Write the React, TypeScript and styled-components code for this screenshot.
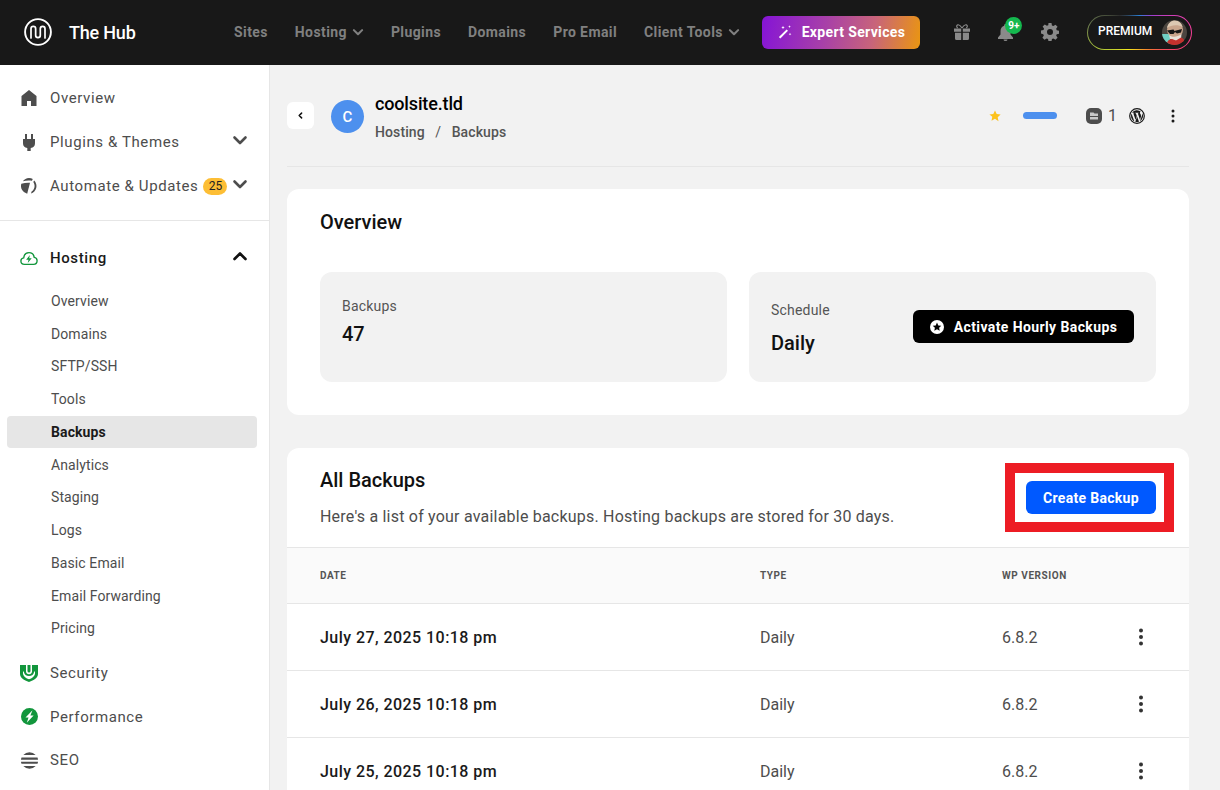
import styled, { createGlobalStyle } from 'styled-components';

const GlobalStyle = createGlobalStyle`
  html, body {
    margin: 0;
    padding: 0;
    height: 790px;
    overflow: hidden;
    background: #f2f2f2;
    font-family: Roboto, "Liberation Sans", sans-serif;
  }
  * {
    box-sizing: border-box;
  }
`;

const chevronPaths = {
  up: 'M2.5 11 8 5.5l5.5 5.5',
  down: 'M2.5 5.5 8 11l5.5-5.5',
  left: 'M10.5 2.500 5 8l5.500 5.500',
};

const Chevron = ({
  dir = 'down',
  size = 16,
  width = 2.6,
}: {
  dir?: 'up' | 'down' | 'left';
  size?: number;
  width?: number;
}) => (
  <svg width={size} height={size} viewBox="0 0 16 16" fill="none">
    <path d={chevronPaths[dir]} stroke="currentColor" strokeWidth={width} strokeLinecap="round" strokeLinejoin="round" />
  </svg>
);

const Logo = () => (
  <svg width="28" height="28" viewBox="0 0 28 28" fill="none" stroke="#fff">
    <circle cx="14" cy="14" r="12.900" strokeWidth="1.900" />
    <path
      d="M7 20V10.700a2.300 2.300 0 0 1 4.650 0v6.600a2.300 2.300 0 0 0 4.650 0v-6.600a2.350 2.350 0 0 1 4.700 0V20"
      strokeWidth="1.700"
      strokeLinecap="round"
    />
  </svg>
);

const WandIcon = () => (
  <svg width="14" height="14" viewBox="0 0 14 14" fill="#fff">
    <path d="M8.6 4.4 10 5.8 2.3 13.5.9 12.1z" />
    <path d="M5 .8l.5 1.2 1.2.5-1.2.5L5 4.2l-.5-1.2-1.2-.5L4.500 2zM11.500 .3l.4 1 1 .4-1 .4-.4 1-.4-1-1-.4 1-.4zM12 7.800l.4 1 1 .4-1 .4-.4 1-.4-1-1-.4 1-.4z" />
  </svg>
);

const GiftIcon = () => (
  <svg width="16" height="16" viewBox="0 0 16 16" fill="#8a8a8a">
    <path d="M0 4.500h7.200v3.300H0zM8.800 4.500H16v3.300H8.800zM1 8.800h6.200V16H2.500A1.500 1.500 0 0 1 1 14.500zM8.800 8.800H15v5.700a1.500 1.500 0 0 1-1.500 1.500H8.800z" />
    <path
      d="M8 4C6.500 1.500 5 .5 3.700 .8 2.300 1.200 2.300 3.300 3.800 4M8 4c1.500-2.500 3-3.500 4.300-3.200 1.400.4 1.400 2.500-.1 3.200"
      fill="none"
      stroke="#8a8a8a"
      strokeWidth="1.200"
    />
  </svg>
);

const BellIcon = () => (
  <svg width="15" height="17" viewBox="0 0 15 17" fill="#8a8a8a">
    <path d="M7.500 0a1.300 1.300 0 0 1 1.300 1.300v.5C11.200 2.400 12.500 4.500 12.500 7v3.500l2.500 3V15H0v-1.500l2.500-3V7c0-2.500 1.300-4.600 3.700-5.200v-.5A1.300 1.300 0 0 1 7.500 0zM5.500 15.500h4a2 1.500 0 0 1-4 0z" />
  </svg>
);

const GearIcon = () => (
  <svg width="18" height="18" viewBox="0 0 24 24" fill="#8a8a8a">
    <path
      fillRule="evenodd"
      d="M10 0h4l.6 3.300 1.900.8L19.300 2.200l2.800 2.800-1.900 2.800.8 1.900 3.300.6v4l-3.300.6-.8 1.900 1.900 2.800-2.800 2.800-2.800-1.900-1.900.8-.6 3.300h-4l-.6-3.300-1.900-.8-2.800 1.900-2.800-2.800 1.900-2.800-.8-1.900L0 14v-4l3.300-.6.8-1.900L2.200 4.700 5 1.900l2.800 1.900 1.900-.8zM12 8a4 4 0 1 0 0 8 4 4 0 0 0 0-8z"
    />
  </svg>
);

const Portrait = () => (
  <svg width="25" height="25" viewBox="0 0 25 25">
    <defs>
      <clipPath id="portrait-clip">
        <circle cx="12.500" cy="12.500" r="12.500" />
      </clipPath>
    </defs>
    <g clipPath="url(#portrait-clip)">
      <rect width="25" height="25" fill="#4c4640" />
      <path d="M0 14h8v11H0z" fill="#6fcfc4" />
      <ellipse cx="13" cy="9.500" rx="8" ry="8.500" fill="#c9a58c" />
      <path d="M5 8c1-5 4-7.500 8-7.500s7 3 7.500 6.500C17 4.500 9 4.500 5 8z" fill="#dcc8b2" />
      <path d="M5 10.500l6.500-1 1 1.500 1.500-.5 6-1.500-1 3.500-4 1-2-1.500-1.500 2H8z" fill="#161616" />
      <path d="M7 15c3 2.500 8 2.500 12.500-1l-.5 5-5 2-6-2z" fill="#e8e1d8" />
      <path d="M4 25c1-4 3-6 6-6l4 1.500 5-3c3 1 4.500 4 4.500 7.500z" fill="#c4312d" />
    </g>
  </svg>
);

const HomeIcon = () => (
  <svg width="16" height="16" viewBox="0 0 16 16" fill="#4d4d4d">
    <path d="M8 0l7.500 6V16H10V11H6v5H.5V6z" />
  </svg>
);

const PlugIcon = () => (
  <svg width="12" height="17" viewBox="0 0 12 17" fill="#4d4d4d">
    <path d="M2 0h2v5H2zM8 0h2v5H8zM0 5h12v4a5 5 0 0 1-4.300 5v3H4.300v-3A5 5 0 0 1 0 9z" />
  </svg>
);

const AutomateIcon = () => (
  <svg width="16" height="16" viewBox="0 0 16 16" fill="#4d4d4d">
    <path d="M1.800 3.300A8 8 0 0 1 8 0c1.400 0 2.700.4 3.800 1L10.900 2.800C8 2.300 4.600 2.500 1.800 3.300z" />
    <path d="M.3 5.800C3 5 6 4.600 9 4.800L6.200 15.800A8 8 0 0 1 .3 5.800z" />
    <path d="M13.200 2.600A7.800 7.800 0 0 1 10 15.500l.6-2c3.400-2 3.800-6.700 1.700-9.500z" />
  </svg>
);

const CloudIcon = () => (
  <svg width="20" height="15" viewBox="0 0 20 15" fill="none">
    <path
      d="M5 14C2.500 14 1 12.300 1 10.300 1 8.400 2.400 7 4.100 6.800 4.500 3.400 7 1 10 1c3 0 5.400 2.300 5.800 5.300 1.800.2 3.200 1.800 3.200 3.800 0 2.200-1.700 3.900-4 3.900z"
      stroke="#12963c"
      strokeWidth="1.500"
    />
    <path d="M11 3.500 6.800 9h2.700L8.600 12.500 13 7.300h-2.800z" fill="#12963c" />
  </svg>
);

const ShieldIcon = () => (
  <svg width="18" height="17" viewBox="0 0 18 17" fill="#12963c">
    <path d="M0 0h6v6.500c0 1.500 1.300 2.700 3 2.700s3-1.200 3-2.700V0h6v9c0 3.500-4 6.500-9 8-5-1.500-9-4.500-9-8z" />
    <path d="M7.500 0h3v6a1.500 1.500 0 0 1-3 0z" />
    <path d="M3 6.500h.8C4.200 9.500 6.300 11 9 11s4.800-1.500 5.200-4.500h.8v2.500c-.6 2.500-3 4.300-6 5.300-3-1-5.400-2.800-6-5.300z" fill="#fff" />
  </svg>
);

const BoltIcon = () => (
  <svg width="17" height="17" viewBox="0 0 17 17">
    <circle cx="8.500" cy="8.500" r="8.500" fill="#12963c" />
    <path d="M11.500 2.300 4.500 9.400h3L5.800 14.700l6.800-7.200H9.400z" fill="#fff" />
  </svg>
);

const SeoIcon = () => (
  <svg width="17" height="17" viewBox="0 0 17 17" fill="#4d4d4d">
    <path d="M2.300 3A8.500 8.500 0 0 1 14.700 3zM.5 5.500h16c.3 1 .5 1.700.5 2.200H0c0-.5.200-1.200.5-2.200zM0 9.700h17c0 .5-.2 1.200-.5 2.100H.5C.200 10.900 0 10.200 0 9.700zM2.300 14h12.400A8.500 8.500 0 0 1 2.300 14z" />
  </svg>
);

const StarIcon = () => (
  <svg width="12" height="12" viewBox="0 0 12 12" fill="#fcc21c">
    <path d="M6 .5l1.700 3.600 3.900.5-2.900 2.700.8 3.900L6 8.800l-3.500 1.900.8-3.900L.4 4.600l3.900-.5z" />
  </svg>
);

const FilesIcon = () => (
  <svg width="16" height="16" viewBox="0 0 16 16">
    <rect width="16" height="16" rx="5" fill="#4d4d4d" />
    <path d="M4 4.500h3.500l1 1H12v2.500H4zM4 9h8v2.500H4z" fill="#c9c9c9" />
  </svg>
);

const WpIcon = () => (
  <svg width="16" height="16" viewBox="0 0 16 16">
    <circle cx="8" cy="8" r="7.300" fill="none" stroke="#1a1a1a" strokeWidth="1.200" />
    <path
      d="M2 8c0 2.400 1.400 4.400 3.400 5.400L2.500 5.600C2.200 6.300 2 7.100 2 8zM12 7.700c0-.7-.3-1.300-.5-1.600-.3-.5-.6-.9-.6-1.400 0-.5.400-1 1-1h.1A6 6 0 0 0 3 4.800h.4c.6 0 1.600-.1 1.600-.1.300 0 .3.500 0 .5 0 0-.3 0-.7.100l2.200 6.500 1.300-3.900-.9-2.600c-.3 0-.6-.1-.6-.1-.3 0-.3-.5 0-.5 0 0 1 .1 1.600.1s1.600-.1 1.600-.1c.3 0 .3.500 0 .5 0 0-.3 0-.7.100l2.200 6.400.6-2c.3-.8.500-1.400.5-2zM8.100 8.500l-1.800 5.300a6 6 0 0 0 3.700-.1l-.1-.1zM13.300 5.100c0 .2 0 .4 0 .7 0 .6-.1 1.300-.5 2.100l-1.800 5.300A6 6 0 0 0 13.300 5.100z"
      fill="#1a1a1a"
    />
  </svg>
);

const BadgeStar = () => (
  <svg width="14" height="14" viewBox="0 0 14 14">
    <circle cx="7" cy="7" r="7" fill="#fff" />
    <path d="M7 2.600l1.300 2.800 3 .3-2.200 2 .6 3L7 9.200l-2.700 1.500.6-3-2.200-2 3-.3z" fill="#000" />
  </svg>
);

const Dots = ({ radius = 2, gap = 6.400 }: { radius?: number; gap?: number }) => (
  <svg width="6" height="18" viewBox="0 0 6 18" fill="currentColor">
    <circle cx="3" cy={9 - gap} r={radius} />
    <circle cx="3" cy="9" r={radius} />
    <circle cx="3" cy={9 + gap} r={radius} />
  </svg>
);

const navLinks = [
  { label: 'Sites' },
  { label: 'Hosting', caret: true },
  { label: 'Plugins' },
  { label: 'Domains' },
  { label: 'Pro Email' },
  { label: 'Client Tools', caret: true },
];

const hostingLinks = [
  'Overview',
  'Domains',
  'SFTP/SSH',
  'Tools',
  'Backups',
  'Analytics',
  'Staging',
  'Logs',
  'Basic Email',
  'Email Forwarding',
  'Pricing',
];

const backups = ['July 27, 2025 10:18 pm', 'July 26, 2025 10:18 pm', 'July 25, 2025 10:18 pm'];

const App = () => {
  return (
    <S.Page>
      <GlobalStyle />
      <S.Header>
        <S.Brand>
          <Logo />
          <S.BrandName>The Hub</S.BrandName>
        </S.Brand>
        <S.Nav>
          {navLinks.map((link) => (
            <S.NavLink key={link.label}>
              {link.label}
              {link.caret && <Chevron size={12} width={2.800} />}
            </S.NavLink>
          ))}
        </S.Nav>
        <S.ExpertButton>
          <WandIcon />
          Expert Services
        </S.ExpertButton>
        <S.HeaderIcons>
          <GiftIcon />
          <S.Bell>
            <BellIcon />
            <S.BellBadge>9+</S.BellBadge>
          </S.Bell>
          <GearIcon />
        </S.HeaderIcons>
        <S.PremiumPill>
          <S.PremiumLabel>PREMIUM</S.PremiumLabel>
          <Portrait />
        </S.PremiumPill>
      </S.Header>

      <S.Body>
        <S.Sidebar>
          <S.TopGroup>
            <S.MainItem>
              <S.ItemIcon>
                <HomeIcon />
              </S.ItemIcon>
              Overview
            </S.MainItem>
            <S.MainItem>
              <S.ItemIcon>
                <PlugIcon />
              </S.ItemIcon>
              Plugins &amp; Themes
              <S.ItemCaret>
                <Chevron />
              </S.ItemCaret>
            </S.MainItem>
            <S.MainItem>
              <S.ItemIcon>
                <AutomateIcon />
              </S.ItemIcon>
              Automate &amp; Updates
              <S.CountBadge>25</S.CountBadge>
              <S.ItemCaret>
                <Chevron />
              </S.ItemCaret>
            </S.MainItem>
          </S.TopGroup>
          <S.HostingGroup>
            <S.MainItem $active>
              <S.ItemIcon>
                <CloudIcon />
              </S.ItemIcon>
              Hosting
              <S.ItemCaret $dark>
                <Chevron dir="up" />
              </S.ItemCaret>
            </S.MainItem>
            <S.SubList>
              {hostingLinks.map((link) => (
                <S.SubItem key={link} $active={link === 'Backups'}>
                  {link}
                </S.SubItem>
              ))}
            </S.SubList>
            <S.LowerList>
              <S.MainItem>
                <S.ItemIcon>
                  <ShieldIcon />
                </S.ItemIcon>
                Security
              </S.MainItem>
              <S.MainItem>
                <S.ItemIcon>
                  <BoltIcon />
                </S.ItemIcon>
                Performance
              </S.MainItem>
              <S.MainItem>
                <S.ItemIcon>
                  <SeoIcon />
                </S.ItemIcon>
                SEO
              </S.MainItem>
            </S.LowerList>
          </S.HostingGroup>
        </S.Sidebar>

        <S.Main>
          <S.SiteBar>
            <S.BackButton>
              <Chevron dir="left" size={7} width={3.500} />
            </S.BackButton>
            <S.SiteAvatar>C</S.SiteAvatar>
            <S.SiteText>
              <S.SiteName>coolsite.tld</S.SiteName>
              <S.Crumbs>
                <span>Hosting</span>
                <S.CrumbSlash>/</S.CrumbSlash>
                <span>Backups</span>
              </S.Crumbs>
            </S.SiteText>
            <S.SiteMeta>
              <StarIcon />
              <S.BlueBar />
              <S.FilesCount>
                <FilesIcon />1
              </S.FilesCount>
              <WpIcon />
              <S.SiteMenu>
                <Dots radius={1.500} gap={5} />
              </S.SiteMenu>
            </S.SiteMeta>
          </S.SiteBar>

          <S.OverviewCard>
            <S.CardTitle>Overview</S.CardTitle>
            <S.StatGrid>
              <S.StatBox>
                <S.StatText $liftBy={10}>
                  <S.StatLabel>Backups</S.StatLabel>
                  <S.StatValue $gap={4}>47</S.StatValue>
                </S.StatText>
              </S.StatBox>
              <S.StatBox>
                <S.StatText $dropBy={3}>
                  <S.StatLabel>Schedule</S.StatLabel>
                  <S.StatValue $gap={9}>Daily</S.StatValue>
                </S.StatText>
                <S.BlackButton>
                  <BadgeStar />
                  Activate Hourly Backups
                </S.BlackButton>
              </S.StatBox>
            </S.StatGrid>
          </S.OverviewCard>

          <S.BackupsCard>
            <S.BackupsHead>
              <S.BackupsIntro>
                <S.CardTitle>All Backups</S.CardTitle>
                <S.CardNote>Here's a list of your available backups. Hosting backups are stored for 30 days.</S.CardNote>
              </S.BackupsIntro>
              <S.Highlight>
                <S.BlueButton>Create Backup</S.BlueButton>
              </S.Highlight>
            </S.BackupsHead>
            <S.TableHead>
              <span>DATE</span>
              <span>TYPE</span>
              <span>WP VERSION</span>
            </S.TableHead>
            {backups.map((date) => (
              <S.Row key={date}>
                <S.RowDate>{date}</S.RowDate>
                <span>Daily</span>
                <span>6.8.2</span>
                <S.RowMenu>
                  <Dots />
                </S.RowMenu>
              </S.Row>
            ))}
          </S.BackupsCard>
        </S.Main>
      </S.Body>
    </S.Page>
  );
};

const S = {
  Page: styled.div`
    width: 1220px;
    height: 790px;
    overflow: hidden;
    display: flex;
    flex-direction: column;
  `,
  Header: styled.header`
    flex: none;
    height: 65px;
    background: #181818;
    display: flex;
    align-items: center;
    padding: 0 28px 1px 24px;
  `,
  Brand: styled.div`
    display: flex;
    align-items: center;
    gap: 17px;
    width: 210px;
  `,
  BrandName: styled.div`
    color: #fff;
    font-size: 18px;
    font-weight: 500;
    letter-spacing: -0.2px;
  `,
  Nav: styled.nav`
    display: flex;
    align-items: center;
    gap: 27px;
  `,
  NavLink: styled.div`
    display: flex;
    align-items: center;
    gap: 5px;
    color: #808080;
    font-size: 14px;
    font-weight: 700;
    letter-spacing: 0.4px;
  `,
  ExpertButton: styled.div`
    margin-left: 22.600px;
    width: 158px;
    height: 33px;
    border-radius: 6px;
    background: linear-gradient(100deg, #8514d6 0%, #a840a8 40%, #c8647a 70%, #ea9610 100%);
    color: #fff;
    font-size: 14px;
    font-weight: 700;
    letter-spacing: 0.35px;
    display: flex;
    align-items: center;
    justify-content: center;
    gap: 10px;
  `,
  HeaderIcons: styled.div`
    margin-left: 34px;
    display: flex;
    align-items: center;
    gap: 28px;
  `,
  Bell: styled.div`
    position: relative;
    display: flex;
  `,
  BellBadge: styled.span`
    position: absolute;
    top: -7px;
    left: 7px;
    width: 17px;
    height: 17px;
    border-radius: 50%;
    background: #14b84e;
    color: #fff;
    font-size: 10px;
    font-weight: 700;
    display: flex;
    align-items: center;
    justify-content: center;
  `,
  PremiumPill: styled.div`
    margin-left: auto;
    width: 105px;
    height: 35px;
    border-radius: 18px;
    border: 1px solid transparent;
    background:
      linear-gradient(#181818, #181818) padding-box,
      conic-gradient(
          #2a7fd6 0deg,
          #9b3fd0 35deg,
          #f23fa8 80deg,
          #f4406a 115deg,
          #f47a30 150deg,
          #f4e81c 215deg,
          #a8c23a 250deg,
          #6a7a50 280deg,
          #2c2c2c 310deg,
          #2a7fd6 360deg
        )
        border-box;
    display: flex;
    align-items: center;
    justify-content: space-between;
    padding: 0 4px 0 10px;
  `,
  PremiumLabel: styled.span`
    color: #fff;
    font-size: 12px;
    font-weight: 500;
    padding-bottom: 2px;
  `,
  Body: styled.div`
    flex: 1;
    min-height: 0;
    display: flex;
  `,
  Sidebar: styled.aside`
    flex: none;
    width: 270px;
    background: #fff;
    border-right: 1px solid #e6e6e6;
    padding: 11px 12px 0 7px;
  `,
  TopGroup: styled.div`
    border-bottom: 1px solid #e6e6e6;
    margin: 0 -12px 0 -7px;
    padding: 0 12px 12px 7px;
  `,
  HostingGroup: styled.div`
    padding-top: 15px;
  `,
  MainItem: styled.div<{ $active?: boolean }>`
    height: 44px;
    display: flex;
    align-items: center;
    padding: 0 9px 0 13px;
    color: ${({ $active }) => ($active ? '#1a1a1a' : '#4d4d4d')};
    font-size: 15px;
    font-weight: ${({ $active }) => ($active ? 500 : 400)};
    letter-spacing: 0.6px;
  `,
  ItemIcon: styled.span`
    flex: none;
    width: 30px;
    display: flex;
    justify-content: center;
    padding-right: 12px;
  `,
  ItemCaret: styled.span<{ $dark?: boolean }>`
    margin-left: auto;
    display: flex;
    color: ${({ $dark }) => ($dark ? '#111' : '#4d4d4d')};
    padding-bottom: 4px;
  `,
  CountBadge: styled.span`
    margin-left: 5px;
    width: 24px;
    height: 17px;
    border-radius: 9px;
    background: #fdbe35;
    color: #222;
    font-size: 12px;
    letter-spacing: 0;
    display: flex;
    align-items: center;
    justify-content: center;
  `,
  SubList: styled.div`
    display: flex;
    flex-direction: column;
    padding-top: 4.500px;
    margin-bottom: 6.500px;
  `,
  SubItem: styled.div<{ $active?: boolean }>`
    height: 32.750px;
    display: flex;
    align-items: center;
    padding-left: 44px;
    border-radius: 4px;
    background: ${({ $active }) => ($active ? '#e6e6e6' : 'transparent')};
    color: ${({ $active }) => ($active ? '#1a1a1a' : '#4d4d4d')};
    font-size: 14px;
    font-weight: ${({ $active }) => ($active ? 700 : 400)};
    letter-spacing: 0.1px;
  `,
  LowerList: styled.div`
    & > * {
      height: 43.500px;
    }
  `,
  Main: styled.main`
    flex: 1;
    min-width: 0;
    padding: 0 31px 0 17px;
  `,
  SiteBar: styled.div`
    height: 102px;
    border-bottom: 1px solid #e6e6e6;
    display: flex;
    align-items: flex-start;
    padding-top: 35px;
  `,
  BackButton: styled.div`
    margin-top: 2px;
    width: 27px;
    height: 27px;
    border-radius: 6px;
    background: #fff;
    color: #111;
    display: flex;
    align-items: center;
    justify-content: center;
  `,
  SiteAvatar: styled.div`
    margin-left: 17px;
    width: 33px;
    height: 33px;
    border-radius: 50%;
    background: #4d90ee;
    color: #fff;
    font-size: 15px;
    font-weight: 500;
    display: flex;
    align-items: center;
    justify-content: center;
  `,
  SiteText: styled.div`
    margin-left: 11px;
    margin-top: -9px;
  `,
  SiteName: styled.div`
    color: #000;
    font-size: 18px;
    font-weight: 500;
    line-height: 26px;
    letter-spacing: -0.15px;
  `,
  Crumbs: styled.div`
    margin-top: 5px;
    color: #555;
    font-size: 14px;
    font-weight: 500;
    line-height: 20px;
    letter-spacing: 0.1px;
  `,
  CrumbSlash: styled.span`
    margin: 0 10.500px;
    font-weight: 400;
  `,
  SiteMeta: styled.div`
    margin-left: auto;
    margin-top: 6px;
    display: flex;
    align-items: center;
    color: #1a1a1a;
    padding-right: 13px;
  `,
  BlueBar: styled.div`
    margin-left: 22px;
    width: 34px;
    height: 7px;
    border-radius: 4px;
    background: #4d90ee;
  `,
  FilesCount: styled.div`
    margin-left: 29px;
    display: flex;
    align-items: center;
    gap: 6px;
    font-size: 16px;
    margin-right: 12px;
    color: #4d4d4d;
  `,
  SiteMenu: styled.span`
    margin-left: 25px;
    display: flex;
  `,
  OverviewCard: styled.section`
    margin-top: 22px;
    height: 226px;
    background: #fff;
    border-radius: 12px;
    padding: 21px 33px 0;
  `,
  CardTitle: styled.h2`
    margin: 0;
    color: #111;
    font-size: 20px;
    font-weight: 500;
    line-height: 24px;
  `,
  StatGrid: styled.div`
    margin-top: 38px;
    display: grid;
    grid-template-columns: 407px 407px;
    gap: 22px;
  `,
  StatBox: styled.div`
    height: 110px;
    background: #f2f2f2;
    border-radius: 12px;
    padding: 0 22px;
    display: flex;
    align-items: center;
    justify-content: space-between;
  `,
  StatText: styled.div<{ $liftBy?: number; $dropBy?: number }>`
    margin-bottom: ${({ $liftBy }) => $liftBy ?? 0}px;
    margin-top: ${({ $dropBy }) => $dropBy ?? 0}px;
  `,
  StatLabel: styled.div`
    color: #555;
    font-size: 14px;
    line-height: 20px;
    letter-spacing: 0.2px;
  `,
  StatValue: styled.div<{ $gap: number }>`
    margin-top: ${({ $gap }) => $gap}px;
    color: #111;
    font-size: 20px;
    font-weight: 500;
    line-height: 28px;
  `,
  BlackButton: styled.div`
    margin-bottom: 1px;
    width: 221px;
    height: 33px;
    border-radius: 6px;
    background: #000;
    color: #fff;
    font-size: 14px;
    font-weight: 700;
    letter-spacing: 0.4px;
    display: flex;
    align-items: center;
    justify-content: center;
    gap: 10px;
  `,
  BackupsCard: styled.section`
    margin-top: 33px;
    background: #fff;
    border-radius: 12px 12px 0 0;
  `,
  BackupsHead: styled.div`
    height: 100px;
    border-bottom: 1px solid #e6e6e6;
    padding: 15px 15px 0 33px;
    display: flex;
    justify-content: space-between;
    align-items: flex-start;
  `,
  BackupsIntro: styled.div`
    padding-top: 5px;
  `,
  CardNote: styled.p`
    margin: 14px 0 0;
    color: #4d4d4d;
    font-size: 16px;
    line-height: 22px;
    letter-spacing: 0.21px;
  `,
  Highlight: styled.div`
    width: 169px;
    height: 69px;
    border: 10px solid #ed1c24;
    display: flex;
    align-items: center;
    justify-content: flex-end;
    padding-right: 8px;
  `,
  BlueButton: styled.div`
    width: 130px;
    height: 33px;
    border-radius: 6px;
    background: #0059ff;
    color: #fff;
    font-size: 14px;
    font-weight: 700;
    letter-spacing: 0.3px;
    display: flex;
    align-items: center;
    justify-content: center;
  `,
  TableHead: styled.div`
    height: 56px;
    background: #fafafa;
    border-bottom: 1px solid #e6e6e6;
    display: grid;
    grid-template-columns: 440px 242px 1fr;
    align-items: center;
    padding-left: 33px;
    color: #555;
    font-size: 10px;
    font-weight: 700;
    letter-spacing: 0.55px;
  `,
  Row: styled.div`
    height: 67px;
    border-bottom: 1px solid #e6e6e6;
    display: grid;
    grid-template-columns: 440px 242px 1fr 6px;
    align-items: center;
    padding: 0 45px 0 33px;
    color: #4d4d4d;
    font-size: 16px;
  `,
  RowDate: styled.span`
    color: #1a1a1a;
    font-weight: 500;
    letter-spacing: 0.45px;
  `,
  RowMenu: styled.span`
    display: flex;
    color: #333;
  `,
};

export default App;
